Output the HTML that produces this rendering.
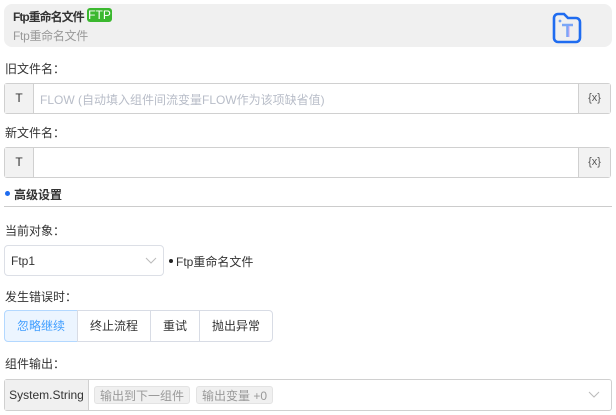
<!DOCTYPE html><html><head><meta charset="utf-8"><style>
*{box-sizing:border-box;margin:0;padding:0}
body{width:616px;height:415px;background:#fff;font-family:"Liberation Sans","Noto Sans CJK SC",sans-serif;font-size:12px;color:#333;position:relative;overflow:hidden}
.a{position:absolute}
.lbl{position:absolute;left:5px;font-size:12px;color:#333}
.inp{position:absolute;left:4px;width:607px;height:31px;border:1px solid #d0d0d0;border-radius:3px;background:#fff}
.inp .t{position:absolute;left:0;top:0;width:29px;height:29px;background:#f2f2f2;border-right:1px solid #d0d0d0;text-align:center;line-height:29px;color:#333}
.inp .x{position:absolute;right:0;top:0;width:32px;height:29px;background:#f2f2f2;border-left:1px solid #d0d0d0;text-align:center;line-height:29px;color:#555;font-size:11px}
.btn{position:absolute;top:310px;height:32px;border:1px solid #d8dce5;line-height:30px;text-align:center;color:#333;background:#fff}
.tag{position:absolute;top:386px;height:18px;line-height:18px;padding:0 5px;background:#f0f0f0;border:1px solid #e3e3e3;border-radius:3px;color:#999}
</style></head><body>
<div class="a" style="left:4px;top:4px;width:608px;height:43px;background:#f0f0f0;border-radius:8px"></div>
<div class="a" style="left:13px;top:8px;font-weight:bold;font-size:12px;color:#333;letter-spacing:-1px">Ftp重命名文件</div>
<div class="a" style="left:87px;top:8px;width:25px;height:14px;background:#3bb82f;border-radius:3px;color:#fff;font-size:12px;line-height:14px;text-align:center">FTP</div>
<div class="a" style="left:13px;top:27px;color:#999;letter-spacing:-0.3px">Ftp重命名文件</div>
<svg class="a" style="left:551px;top:11px" width="32" height="34" viewBox="0 0 32 34"><path d="M3 7 a4 4 0 0 1 4-4 h6 l4 4 h8 a4 4 0 0 1 4 4 v16 a4 4 0 0 1-4 4 h-18 a4 4 0 0 1-4-4z" fill="none" stroke="#1f6cf0" stroke-width="2.6"/><circle cx="9" cy="10" r="1.4" fill="#6ea0f5"/><path d="M11 14 h11 M16.5 14 v12" stroke="#7aa6f7" stroke-width="2.6"/><path d="M18 15 v11" stroke="#c9a6f2" stroke-width="1"/></svg>
<div class="lbl" style="top:60px">旧文件名：</div>
<div class="inp" style="top:83px"><div class="t">T</div><div class="a" style="left:35px;top:7px;color:#b8bdc8">FLOW (自动填入组件间流变量FLOW作为该项缺省值)</div><div class="x">{x}</div></div>
<div class="lbl" style="top:124px">新文件名：</div>
<div class="inp" style="top:147px"><div class="t">T</div><div class="x">{x}</div></div>
<div class="a" style="left:5px;top:191px;width:5px;height:5px;border-radius:50%;background:#1f6cf0"></div>
<div class="a" style="left:14px;top:186px;font-weight:bold">高级设置</div>
<div class="a" style="left:4px;top:206px;width:608px;height:1px;background:#ccc"></div>
<div class="lbl" style="top:222px">当前对象：</div>
<div class="a" style="left:4px;top:245px;width:160px;height:31px;border:1px solid #dcdfe6;border-radius:4px"></div>
<div class="a" style="left:11px;top:254px">Ftp1</div>
<svg class="a" style="left:145px;top:257px" width="12" height="8"><path d="M1 1 l5 5 l5-5" fill="none" stroke="#bbb"/></svg>
<div class="a" style="left:169px;top:259px;width:4px;height:4px;border-radius:50%;background:#222"></div>
<div class="a" style="left:176px;top:253px">Ftp重命名文件</div>
<div class="lbl" style="top:288px">发生错误时：</div>
<div class="btn" style="left:4px;width:74px;background:#ecf5ff;border-color:#b3d8ff;color:#409eff;border-radius:4px 0 0 4px">忽略继续</div>
<div class="btn" style="left:77px;width:74px">终止流程</div>
<div class="btn" style="left:150px;width:50px">重试</div>
<div class="btn" style="left:199px;width:74px;border-radius:0 4px 4px 0">抛出异常</div>
<div class="lbl" style="top:355px">组件输出：</div>
<div class="a" style="left:4px;top:379px;width:608px;height:32px;border:1px solid #d0d0d0;border-radius:3px"></div>
<div class="a" style="left:5px;top:380px;width:84px;height:30px;background:#f0f0f0;border-right:1px solid #d0d0d0;line-height:30px;text-align:center">System.String</div>
<div class="tag" style="left:94px">输出到下一组件</div>
<div class="tag" style="left:196px">输出变量 +0</div>
<svg class="a" style="left:588px;top:391px" width="12" height="8"><path d="M1 1 l5 5 l5-5" fill="none" stroke="#bbb"/></svg>
</body></html>
